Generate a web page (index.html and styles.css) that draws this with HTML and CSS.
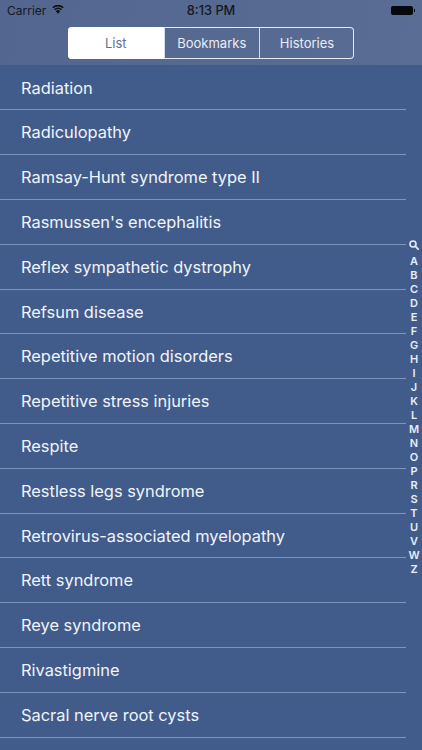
FILE: index.html
```html
<!DOCTYPE html>
<html lang="en">
<head>
<meta charset="utf-8">
<title>List</title>
<link rel="stylesheet" href="styles.css">
</head>
<body>
<div class="app">
  <header class="top">
    <div class="status">
      <div class="status-left">
        <span>Carrier</span>
        <svg class="wifi" viewBox="0 0 14 10" width="12" height="9"><path d="M7 10 4.4 7a3.6 3.6 0 0 1 5.2 0z" fill="#111"/><path d="M3 5.3a5.6 5.6 0 0 1 8 0M.9 3a8.6 8.6 0 0 1 12.2 0" fill="none" stroke="#111" stroke-width="1.8"/></svg>
      </div>
      <div class="status-time">8:13 PM</div>
      <div class="status-right">
        <span class="battery"></span><span class="battery-tip"></span>
      </div>
    </div>
    <nav class="segments">
      <div class="segment active">List</div>
      <div class="segment">Bookmarks</div>
      <div class="segment">Histories</div>
    </nav>
  </header>
  <main class="content">
    <ul class="list">
      <li class="row">Radiation</li>
      <li class="row">Radiculopathy</li>
      <li class="row">Ramsay-Hunt syndrome type II</li>
      <li class="row">Rasmussen's encephalitis</li>
      <li class="row">Reflex sympathetic dystrophy</li>
      <li class="row">Refsum disease</li>
      <li class="row">Repetitive motion disorders</li>
      <li class="row">Repetitive stress injuries</li>
      <li class="row">Respite</li>
      <li class="row">Restless legs syndrome</li>
      <li class="row">Retrovirus-associated myelopathy</li>
      <li class="row">Rett syndrome</li>
      <li class="row">Reye syndrome</li>
      <li class="row">Rivastigmine</li>
      <li class="row">Sacral nerve root cysts</li>
    </ul>
    <div class="index">
      <svg class="search" viewBox="0 0 10 10" width="10" height="10"><circle cx="4" cy="4" r="3" fill="none" stroke="#e8edf6" stroke-width="1.6"/><path d="M6.2 6.2 9.2 9.2" stroke="#e8edf6" stroke-width="1.8" stroke-linecap="round"/></svg>
      <span>A</span><span>B</span><span>C</span><span>D</span><span>E</span><span>F</span><span>G</span><span>H</span><span>I</span><span>J</span><span>K</span><span>L</span><span>M</span><span>N</span><span>O</span><span>P</span><span>R</span><span>S</span><span>T</span><span>U</span><span>V</span><span>W</span><span>Z</span>
    </div>
  </main>
</div>
</body>
</html>
```
FILE: styles.css
```css
* { box-sizing: border-box; }
html, body { margin: 0; padding: 0; }
body {
  width: 422px;
  height: 750px;
  overflow: hidden;
  font-family: Inter, "Liberation Sans", sans-serif;
  background: #415c8b;
}
.app { display: flex; flex-direction: column; height: 750px; }
.top {
  height: 65px;
  flex: none;
  background: linear-gradient(100deg, #536690 0%, #566a92 60%, #5a6d94 100%);
}
.status {
  height: 21px;
  display: grid;
  grid-template-columns: 1fr auto 1fr;
  align-items: center;
  padding: 0 7px;
  font-size: 12px;
  color: #16181f;
}
.status-left { display: flex; align-items: center; gap: 6px; }
.wifi { flex: none; margin-top: -2px; }
.status-time { font-size: 12.8px; font-weight: 500; }
.status-right { display: flex; justify-content: flex-end; align-items: center; }
.battery { width: 22px; height: 9px; border-radius: 2px; background: #08090c; }
.battery-tip { width: 1.5px; height: 3px; background: #08090c; margin-left: 0.5px; }
.segments {
  display: grid;
  grid-template-columns: 95.5px 95.5px 95px;
  width: 286px;
  height: 32px;
  margin: 6px 0 0 68px;
  border-radius: 4px;
  overflow: hidden;
  box-shadow: inset 0 0 0 1px #e6ebf4;
}
.segment {
  display: flex;
  align-items: center;
  justify-content: center;
  font-size: 13px;
  color: #e9edf5;
  border-left: 1px solid #d4dbe9;
}
.segment.active { background: #fff; color: #5f7096; border-left: 0; }
.content { position: relative; flex: 1; overflow: hidden; }
.list { list-style: none; margin: 0; padding: 0.7px 0 0; }
.row {
  height: 44.8px;
  margin-right: 16px;
  padding-left: 21px;
  display: flex;
  align-items: center;
  font-size: 16.4px;
  color: #f1f4fa;
  border-bottom: 1px solid #8094bb;
}
.index {
  position: absolute;
  top: 175px;
  right: 0;
  width: 16px;
  display: flex;
  flex-direction: column;
  align-items: center;
  font-size: 11px;
  font-weight: 600;
  line-height: 14px;
  color: #e8edf6;
}
.search { margin-bottom: 4px; }
```
